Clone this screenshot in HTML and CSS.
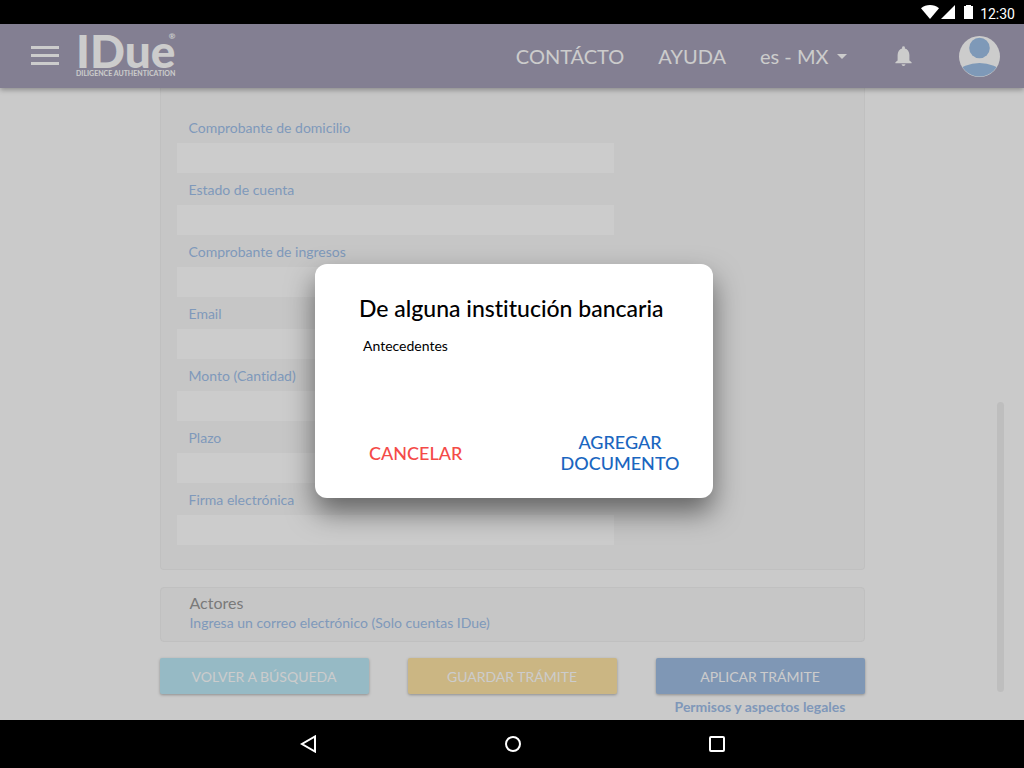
FILE: index.html
```html
<!DOCTYPE html>
<html lang="es-MX">
<head>
    <meta charset="UTF-8">
    <meta name="viewport" content="width=device-width, initial-scale=1.0">
    <title>IDue</title>
    <link rel="stylesheet" href="styles.css">
</head>
<body>
    <div class="status-bar">
        <svg class="status-icons" viewBox="0 0 54 16" width="54" height="16">
            <path d="M0 4.200C5 0 13 0 18 4.200L9 15z"/>
            <path d="M34 1v14H20z"/>
            <path d="M43 2h2V1h5v1h2v13h-9z"/>
        </svg>
        <span class="clock">12:30</span>
    </div>

    <div class="app">
        <header class="header">
            <button type="button" class="menu-button" aria-label="Menú">
                <svg viewBox="0 0 28 20" width="28" height="20"><path d="M0 0h28v3H0zM0 8h28v3H0zM0 16h28v3H0z"/></svg>
            </button>
            <a href="#" class="logo">
                <span class="logo-name">IDue</span>
                <span class="logo-tagline">DILIGENCE AUTHENTICATION</span>
                <span class="logo-mark">®</span>
            </a>
            <nav class="nav">
                <a href="#" class="nav-contact">CONTÁCTO</a>
                <a href="#" class="nav-help">AYUDA</a>
                <div class="language">
                    <select class="language-select" aria-label="Idioma">
                        <option>es - MX</option>
                    </select>
                    <svg class="language-arrow" viewBox="0 0 10 5" width="10" height="5"><path d="M0 0h10L5 5z"/></svg>
                </div>
                <button type="button" class="bell-button" aria-label="Notificaciones">
                    <svg viewBox="0 0 17 20" width="17" height="20"><path d="M8.500 20a2 2 0 0 0 2-1.700h-4a2 2 0 0 0 2 1.700zM14.400 14.500V9c0-3.400-1.800-5.800-4.500-6.500V1.600a1.400 1.400 0 0 0-2.800 0v.9C4.400 3.200 2.600 5.600 2.600 9v5.500L.4 16.200v1.100h16.200v-1.100z"/></svg>
                </button>
                <button type="button" class="avatar-button" aria-label="Perfil">
                    <svg viewBox="0 0 41 41" width="41" height="41">
                        <clipPath id="avatar"><circle cx="20.500" cy="20.500" r="20"/></clipPath>
                        <circle cx="20.500" cy="20.500" r="20.500" fill="#fff"/>
                        <g clip-path="url(#avatar)" fill="#9ec0e6">
                            <circle cx="20.500" cy="12" r="10.300"/>
                            <circle cx="20.500" cy="64" r="37"/>
                        </g>
                    </svg>
                </button>
            </nav>
        </header>

        <main class="content">
            <form>
                <section class="panel fields">
                    <div class="form-group">
                        <label for="domicilio">Comprobante de domicilio</label>
                        <input type="text" id="domicilio">
                    </div>
                    <div class="form-group">
                        <label for="cuenta">Estado de cuenta</label>
                        <input type="text" id="cuenta">
                    </div>
                    <div class="form-group">
                        <label for="ingresos">Comprobante de ingresos</label>
                        <input type="text" id="ingresos">
                    </div>
                    <div class="form-group">
                        <label for="email">Email</label>
                        <input type="email" id="email">
                    </div>
                    <div class="form-group">
                        <label for="monto">Monto (Cantidad)</label>
                        <input type="text" id="monto">
                    </div>
                    <div class="form-group">
                        <label for="plazo">Plazo</label>
                        <input type="text" id="plazo">
                    </div>
                    <div class="form-group">
                        <label for="firma">Firma electrónica</label>
                        <input type="text" id="firma">
                    </div>
                </section>

                <section class="panel actors">
                    <h2>Actores</h2>
                    <p>Ingresa un correo electrónico (Solo cuentas IDue)</p>
                </section>

                <div class="actions">
                    <button type="button" class="btn btn-back">VOLVER A BÚSQUEDA</button>
                    <button type="button" class="btn btn-save">GUARDAR TRÁMITE</button>
                    <div class="apply">
                        <button type="button" class="btn btn-apply">APLICAR TRÁMITE</button>
                        <a href="#" class="legal-link">Permisos y aspectos legales</a>
                    </div>
                </div>
            </form>
        </main>
        <div class="scrollbar"></div>

        <div class="overlay">
            <div class="modal" role="dialog" aria-labelledby="modalTitle">
                <h1 id="modalTitle">De alguna institución bancaria</h1>
                <p>Antecedentes</p>
                <div class="modal-actions">
                    <button type="button" class="modal-cancel">CANCELAR</button>
                    <button type="button" class="modal-add">AGREGAR DOCUMENTO</button>
                </div>
            </div>
        </div>
    </div>

    <div class="system-nav">
        <button type="button" aria-label="Atrás">
            <svg viewBox="0 0 18 18" width="18" height="18"><path d="M15 1.500v15L2 9z"/></svg>
        </button>
        <button type="button" aria-label="Inicio">
            <svg viewBox="0 0 18 18" width="18" height="18"><circle cx="9" cy="9" r="7"/></svg>
        </button>
        <button type="button" aria-label="Recientes">
            <svg viewBox="0 0 18 18" width="18" height="18"><rect x="2" y="2" width="14" height="14" rx="1"/></svg>
        </button>
    </div>
</body>
</html>
```

FILE: styles.css
```css
* {
    box-sizing: border-box;
}
body {
    margin: 0;
    min-height: 100vh;
    display: flex;
    flex-direction: column;
    font-family: Lato, sans-serif;
    font-variant-ligatures: none;
    background-color: #000;
}
button, input, select {
    font-family: inherit;
}
button {
    border: none;
    padding: 0;
    background: none;
    cursor: pointer;
}
a {
    text-decoration: none;
}
svg {
    display: block;
}

/* Android status bar */
.status-bar {
    height: 24px;
    display: flex;
    justify-content: flex-end;
    align-items: center;
    gap: 5px;
    padding: 0 9px;
    color: #fff;
}
.status-icons {
    fill: #fff;
}
.clock {
    font-family: Roboto, sans-serif;
    font-size: 14px;
    line-height: 16px;
    padding-top: 4px;
}

.app {
    position: relative;
    flex: 1;
    background-color: #fdfdfd;
}

/* Header */
.header {
    position: relative;
    height: 64px;
    display: flex;
    align-items: center;
    padding: 0 24px 0 31px;
    background-color: #a49fb7;
    box-shadow: 0 2px 5px rgba(0, 0, 0, 0.3);
}
.menu-button svg, .bell-button svg, .language-arrow {
    fill: #fff;
}
.logo {
    position: relative;
    display: flex;
    flex-direction: column;
    margin-left: 17px;
    padding-bottom: 3px;
    color: #fff;
}
.logo-name {
    font-size: 46px;
    font-weight: 900;
    line-height: 37px;
}
.logo-tagline {
    font-size: 7px;
    font-weight: 700;
    line-height: 8px;
}
.logo-mark {
    position: absolute;
    top: 0;
    right: 0;
    font-size: 8px;
    font-weight: 700;
    line-height: 8px;
}
.nav {
    display: flex;
    align-items: center;
    margin-left: auto;
    color: #fff;
    font-size: 20px;
}
.nav a {
    color: #fff;
    margin-right: 34px;
}
.language {
    display: flex;
    align-items: center;
    gap: 8px;
}
.language-select {
    appearance: none;
    border: none;
    padding: 0;
    background: none;
    color: #fff;
    font-size: 20px;
}
.bell-button {
    margin: 0 47px 0 48px;
}

/* Form */
.content {
    max-width: 705px;
    margin: 0 auto;
}
.panel {
    background-color: #f8f8f8;
    border: 1px solid #f0f0f0;
    border-radius: 4px;
}
.fields {
    display: flex;
    flex-direction: column;
    gap: 7px;
    border-top: none;
    border-radius: 0 0 4px 4px;
    padding: 30px 16px 24px;
}
.form-group {
    max-width: 437px;
    display: flex;
    flex-direction: column;
    gap: 5px;
}
.form-group label {
    padding-left: 12px;
    color: #9fc0ea;
    font-size: 14px;
    line-height: 20px;
}
.form-group input {
    width: 100%;
    height: 30px;
    padding: 0 12px;
    border: none;
    background-color: #fff;
    font-size: 14px;
}
.actors {
    height: 55px;
    margin-top: 17px;
    padding: 5px 29px;
}
.actors h2 {
    margin: 0;
    color: #999;
    font-size: 16px;
    font-weight: 400;
    line-height: 20px;
}
.actors p {
    margin: 0;
    color: #9fc0ea;
    font-size: 14px;
    line-height: 20px;
}
.actions {
    display: grid;
    grid-template-columns: repeat(3, 1fr);
    align-items: start;
    gap: 39px;
    margin-top: 16px;
}
.btn {
    width: 100%;
    height: 36px;
    border-radius: 2px;
    color: #fff;
    font-size: 14px;
    box-shadow: 0 1px 3px rgba(0, 0, 0, 0.3);
}
.btn-back {
    background-color: #bce9f7;
}
.btn-save {
    background-color: #fee4a4;
}
.btn-apply {
    background-color: #9fbde3;
}
.apply {
    display: flex;
    flex-direction: column;
    align-items: center;
    gap: 4px;
}
.legal-link {
    color: #9fbde8;
    font-size: 14px;
    font-weight: 700;
    line-height: 18px;
}
.scrollbar {
    position: absolute;
    right: 20px;
    bottom: 28px;
    width: 7px;
    height: 290px;
    border-radius: 4px;
    background-color: #eee;
}

/* Modal */
.overlay {
    position: absolute;
    inset: 0;
    display: flex;
    justify-content: center;
    align-items: center;
    padding: 18px 0 0 4px;
    background-color: rgba(0, 0, 0, 0.2);
}
.modal {
    width: 398px;
    min-height: 234px;
    display: flex;
    flex-direction: column;
    padding: 30px 27px 24px 44px;
    border-radius: 12px;
    background-color: #fff;
    box-shadow: 0 14px 28px rgba(0, 0, 0, 0.5);
}
.modal h1 {
    margin: 0;
    color: #000;
    font-size: 23px;
    font-weight: 500;
    line-height: 28px;
}
.modal p {
    margin: 14px 4px 0;
    color: #000;
    font-size: 14px;
    line-height: 20px;
}
.modal-actions {
    display: flex;
    justify-content: space-between;
    align-items: center;
    margin-top: auto;
    padding-left: 10px;
}
.modal-actions button {
    font-size: 18px;
    font-weight: 500;
    line-height: 21px;
}
.modal-cancel {
    color: #f44b48;
}
.modal-add {
    width: 132px;
    color: #1a66c0;
}

/* Android navigation bar */
.system-nav {
    height: 48px;
    display: flex;
    justify-content: center;
    align-items: center;
    gap: 186px;
    padding-left: 2px;
}
.system-nav svg {
    fill: none;
    stroke: #fff;
    stroke-width: 2;
}
```
